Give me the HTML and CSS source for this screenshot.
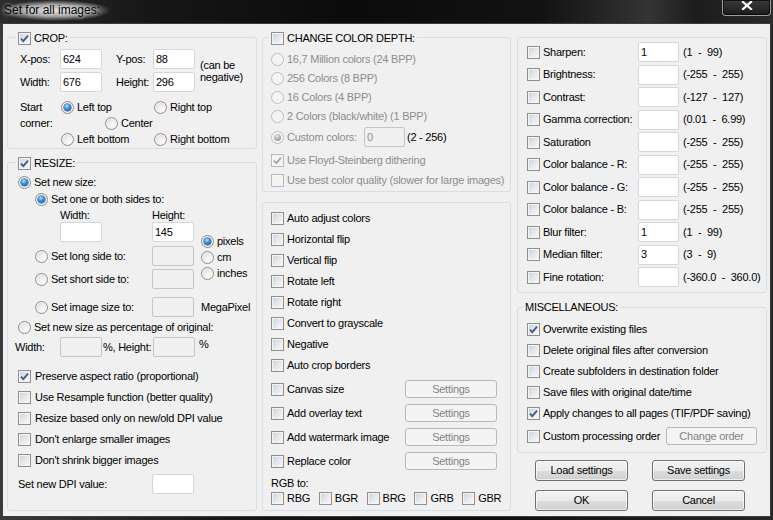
FILE: index.html
```html
<!DOCTYPE html>
<html lang="en">
<head>
<meta charset="utf-8">
<title>Set for all images</title>
<link rel="stylesheet" href="styles.css">
</head>
<body>
<div class="win">
  <div class="titlebar">
    <div class="title">Set for all images:</div>
    <div class="close"><svg width="12" height="9" viewBox="0 0 12 9"><path d="M2 1 L10 8 M10 1 L2 8" stroke="#fff" stroke-width="2.3" stroke-linecap="square"/></svg></div>
  </div>
  <div class="client">
    <!-- LEFT COLUMN -->
    <div class="col c1">
      <div class="grp crop">
        <div class="lgd lg-11"><span class="cb on"><svg width="11" height="11" viewBox="0 0 11 11"><path d="M2 5.6 4.3 8.1 9 2.6" fill="none" stroke="#3e5a96" stroke-width="1.8"/></svg></span><span>CROP:</span></div>
        <div class="cropgrid">
          <span class="cl1">X-pos:</span><span class="tb">624</span><span class="cl3">Y-pos:</span><span class="tb">88</span>
          <span class="note">(can be<br>negative)</span>
          <span class="cl1">Width:</span><span class="tb">676</span><span class="cl3">Height:</span><span class="tb">296</span>
        </div>
        <div class="corner">
          <span class="startlbl">Start<br>corner:</span>
          <span class="opt k-lt"><span class="rb on"></span>Left top</span>
          <span class="opt k-rt"><span class="rb"></span>Right top</span>
          <span class="opt k-c"><span class="rb"></span>Center</span>
          <span class="opt k-lb"><span class="rb"></span>Left bottom</span>
          <span class="opt k-rb"><span class="rb"></span>Right bottom</span>
        </div>
      </div>

      <div class="grp resize fill">
        <div class="lgd lg-11"><span class="cb on"><svg width="11" height="11" viewBox="0 0 11 11"><path d="M2 5.6 4.3 8.1 9 2.6" fill="none" stroke="#3e5a96" stroke-width="1.8"/></svg></span><span>RESIZE:</span></div>
        <div class="row h17 p10"><span class="opt"><span class="rb on"></span>Set new size:</span></div>
        <div class="row h17 p27"><span class="opt"><span class="rb on"></span>Set one or both sides to:</span></div>
        <div class="sizegrid">
          <span class="s-wl">Width:</span>
          <span class="s-hl">Height:</span>
          <span class="tb s-wi"></span>
          <span class="tb s-hi">145</span>
          <div class="units">
            <span class="opt"><span class="rb on"></span>pixels</span>
            <span class="opt"><span class="rb"></span>cm</span>
            <span class="opt"><span class="rb"></span>inches</span>
          </div>
          <span class="opt s-r4"><span class="rb"></span>Set long side to:</span>
          <span class="tb off s-i4"></span>
          <span class="opt s-r6"><span class="rb"></span>Set short side to:</span>
          <span class="tb off s-i6"></span>
          <span class="opt s-r8"><span class="rb"></span>Set image size to:</span>
          <span class="tb off s-i8"></span>
          <span class="s-mp">MegaPixel</span>
        </div>
        <div class="row h16 p10 mt2"><span class="opt"><span class="rb"></span>Set new size as percentage of original:</span></div>
        <div class="row pctrow">
          <span class="pw">Width:</span><span class="tb off"></span><span class="ph">%, Height:</span><span class="tb off"></span><span class="pp">%</span>
        </div>
        <div class="cblist">
          <div class="row h21"><span class="opt g4"><span class="cb on"><svg width="11" height="11" viewBox="0 0 11 11"><path d="M2 5.6 4.3 8.1 9 2.6" fill="none" stroke="#3e5a96" stroke-width="1.8"/></svg></span>Preserve aspect ratio (proportional)</span></div>
          <div class="row h21"><span class="opt g4"><span class="cb"></span>Use Resample function (better quality)</span></div>
          <div class="row h21"><span class="opt g4"><span class="cb"></span>Resize based only on new/old DPI value</span></div>
          <div class="row h21"><span class="opt g4"><span class="cb"></span>Don't enlarge smaller images</span></div>
          <div class="row h21"><span class="opt g4"><span class="cb"></span>Don't shrink bigger images</span></div>
        </div>
        <div class="row dpirow"><span class="dpil">Set new DPI value:</span><span class="tb"></span></div>
      </div>
    </div>

    <!-- MIDDLE COLUMN -->
    <div class="col c2">
      <div class="grp ccd">
        <div class="lgd lg-9"><span class="cb"></span><span>CHANGE COLOR DEPTH:</span></div>
        <div class="row h19 p8 dis"><span class="opt"><span class="rb"></span>16,7 Million colors (24 BPP)</span></div>
        <div class="row h19 p8 dis"><span class="opt"><span class="rb"></span>256 Colors (8 BPP)</span></div>
        <div class="row h19 p8 dis"><span class="opt"><span class="rb"></span>16 Colors (4 BPP)</span></div>
        <div class="row h19 p8 dis"><span class="opt"><span class="rb"></span>2 Colors (black/white) (1 BPP)</span></div>
        <div class="row h20 p8 mt1"><span class="opt dis w93"><span class="rb on"></span>Custom colors:</span><span class="tb off gray w41">0</span><span class="ml2">(2 - 256)</span></div>
        <div class="row h20 p8 mt3 dis"><span class="opt"><span class="cb on"><svg width="11" height="11" viewBox="0 0 11 11"><path d="M2 5.6 4.3 8.1 9 2.6" fill="none" stroke="#a7a7a7" stroke-width="1.8"/></svg></span>Use Floyd-Steinberg dithering</span></div>
        <div class="row h20 p8 dis"><span class="opt"><span class="cb"></span>Use best color quality (slower for large images)</span></div>
      </div>

      <div class="grp ops fill">
        <div class="row h21 p8"><span class="opt"><span class="cb"></span>Auto adjust colors</span></div>
        <div class="row h21 p8"><span class="opt"><span class="cb"></span>Horizontal flip</span></div>
        <div class="row h21 p8"><span class="opt"><span class="cb"></span>Vertical flip</span></div>
        <div class="row h21 p8"><span class="opt"><span class="cb"></span>Rotate left</span></div>
        <div class="row h21 p8"><span class="opt"><span class="cb"></span>Rotate right</span></div>
        <div class="row h21 p8"><span class="opt"><span class="cb"></span>Convert to grayscale</span></div>
        <div class="row h21 p8"><span class="opt"><span class="cb"></span>Negative</span></div>
        <div class="row h21 p8"><span class="opt"><span class="cb"></span>Auto crop borders</span></div>
        <div class="row h24 p8 mt1"><span class="opt w134"><span class="cb"></span>Canvas size</span><span class="btn off sbtn">Settings</span></div>
        <div class="row h24 p8"><span class="opt w134"><span class="cb"></span>Add overlay text</span><span class="btn off sbtn">Settings</span></div>
        <div class="row h24 p8"><span class="opt w134"><span class="cb"></span>Add watermark image</span><span class="btn off sbtn">Settings</span></div>
        <div class="row h24 p8"><span class="opt w134"><span class="cb"></span>Replace color</span><span class="btn off sbtn">Settings</span></div>
        <div class="row h14 p8 mt3">RGB to:</div>
        <div class="row h16 p8">
          <span class="opt w48"><span class="cb"></span>RBG</span>
          <span class="opt w48"><span class="cb"></span>BGR</span>
          <span class="opt w48"><span class="cb"></span>BRG</span>
          <span class="opt w48"><span class="cb"></span>GRB</span>
          <span class="opt w48"><span class="cb"></span>GBR</span>
        </div>
      </div>
    </div>

    <!-- RIGHT COLUMN -->
    <div class="col c3">
      <div class="grp adj">
        <div class="rrow"><span class="opt"><span class="cb"></span>Sharpen:</span><span class="tb w41">1</span><span class="rng">(1&nbsp; -&nbsp; 99)</span></div>
        <div class="rrow"><span class="opt"><span class="cb"></span>Brightness:</span><span class="tb w41"></span><span class="rng">(-255&nbsp; -&nbsp; 255)</span></div>
        <div class="rrow"><span class="opt"><span class="cb"></span>Contrast:</span><span class="tb w41"></span><span class="rng">(-127&nbsp; -&nbsp; 127)</span></div>
        <div class="rrow"><span class="opt"><span class="cb"></span>Gamma correction:</span><span class="tb w41"></span><span class="rng">(0.01&nbsp; -&nbsp; 6.99)</span></div>
        <div class="rrow"><span class="opt"><span class="cb"></span>Saturation</span><span class="tb w41"></span><span class="rng">(-255&nbsp; -&nbsp; 255)</span></div>
        <div class="rrow"><span class="opt"><span class="cb"></span>Color balance - R:</span><span class="tb w41"></span><span class="rng">(-255&nbsp; -&nbsp; 255)</span></div>
        <div class="rrow"><span class="opt"><span class="cb"></span>Color balance - G:</span><span class="tb w41"></span><span class="rng">(-255&nbsp; -&nbsp; 255)</span></div>
        <div class="rrow"><span class="opt"><span class="cb"></span>Color balance - B:</span><span class="tb w41"></span><span class="rng">(-255&nbsp; -&nbsp; 255)</span></div>
        <div class="rrow"><span class="opt"><span class="cb"></span>Blur filter:</span><span class="tb w41">1</span><span class="rng">(1&nbsp; -&nbsp; 99)</span></div>
        <div class="rrow"><span class="opt"><span class="cb"></span>Median filter:</span><span class="tb w41">3</span><span class="rng">(3&nbsp; -&nbsp; 9)</span></div>
        <div class="rrow"><span class="opt"><span class="cb"></span>Fine rotation:</span><span class="tb w41"></span><span class="rng">(-360.0&nbsp; -&nbsp; 360.0)</span></div>
      </div>

      <div class="grp misc">
        <div class="lgd lg-7"><span>MISCELLANEOUS:</span></div>
        <div class="row h21 p9"><span class="opt"><span class="cb on"><svg width="11" height="11" viewBox="0 0 11 11"><path d="M2 5.6 4.3 8.1 9 2.6" fill="none" stroke="#3e5a96" stroke-width="1.8"/></svg></span>Overwrite existing files</span></div>
        <div class="row h21 p9"><span class="opt"><span class="cb"></span>Delete original files after conversion</span></div>
        <div class="row h21 p9"><span class="opt"><span class="cb"></span>Create subfolders in destination folder</span></div>
        <div class="row h21 p9"><span class="opt"><span class="cb"></span>Save files with original date/time</span></div>
        <div class="row h21 p9"><span class="opt"><span class="cb on"><svg width="11" height="11" viewBox="0 0 11 11"><path d="M2 5.6 4.3 8.1 9 2.6" fill="none" stroke="#3e5a96" stroke-width="1.8"/></svg></span>Apply changes to all pages (TIF/PDF saving)</span></div>
        <div class="row h21 p9 mt2"><span class="opt w139"><span class="cb"></span>Custom processing order</span><span class="btn off obtn">Change order</span></div>
      </div>

      <div class="btns">
        <span class="btn">Load settings</span>
        <span class="btn">Save settings</span>
        <span class="btn">OK</span>
        <span class="btn">Cancel</span>
      </div>
    </div>
  </div>
</div>
</body>
</html>
```

FILE: styles.css
```css
* { box-sizing: border-box; margin: 0; padding: 0; }
html, body { width: 773px; height: 520px; overflow: hidden; }
body {
  background: linear-gradient(90deg, #3a3a3a 0, #161616 30%, #0b0b0b 60%, #262626 100%);
  font-family: "Liberation Sans", Arial, sans-serif;
  font-size: 11px;
  letter-spacing: -0.25px;
  line-height: 13px;
  color: #000;
}
.win { display: flex; flex-direction: column; height: 520px; }

/* title bar */
.titlebar {
  flex: none;
  height: 23px;
  display: flex;
  align-items: flex-start;
  background: linear-gradient(90deg, #2c2c2c 0, #161616 20%, #0b0b0b 45%, #121212 70%, #343434 84%, #1c1c1c 90%, #2b2b2b 100%);
}
.title {
  height: 21px;
  line-height: 21px;
  font-size: 12px;
  letter-spacing: 0;
  padding: 0 46px 0 4px;
  margin-right: auto;
  background: radial-gradient(ellipse closest-side at 38% 50%, rgba(230,230,230,.95) 0, rgba(205,205,205,.75) 55%, rgba(120,120,120,0) 100%);
  text-shadow: 0 0 4px #fff;
}
.close {
  width: 49px;
  height: 16px;
  margin-right: 2px;
  border: 1px solid #a0a0a0;
  border-top: none;
  border-radius: 0 0 4px 4px;
  background: linear-gradient(#3a3a3a, #1c1c1c);
  box-shadow: inset 0 0 0 1px rgba(0,0,0,.7);
  display: flex;
  justify-content: center;
  align-items: flex-start;
  padding-top: 1px;
}

/* client */
.client {
  flex: none;
  width: 769px;
  height: 494px;
  margin-left: 2px;
  border: 1px solid #3c3c3c;
  background: #f0f0f0;
  display: flex;
  padding: 13px 3px 5px 4px;
}
.col { display: flex; flex-direction: column; }
.c1 { width: 250px; margin-right: 5px; }
.c2 { width: 249px; margin-right: 6px; }
.c3 { width: 250px; }

.grp { position: relative; flex: none; border: 1px solid #d5dfe5; border-radius: 3px; }
.fill { flex: 1; }

.lgd {
  position: absolute;
  top: -7px;
  height: 14px;
  display: flex;
  align-items: center;
  gap: 3px;
  padding: 0 2px;
  background: #f0f0f0;
  white-space: nowrap;
}
.lg-11 { left: 8px; }
.lg-9 { left: 6px; }
.lg-7 { left: 5px; }

/* generic controls */
.row { display: flex; align-items: center; white-space: nowrap; }
.opt { display: inline-flex; align-items: center; gap: 3px; white-space: nowrap; }
.g4 { gap: 4px; }
.h14 { height: 14px; } .h16 { height: 16px; } .h17 { height: 17px; } .h19 { height: 19px; }
.h20 { height: 20px; } .h21 { height: 21px; } .h24 { height: 24px; }
.p8 { padding-left: 8px; } .p9 { padding-left: 9px; } .p10 { padding-left: 10px; } .p27 { padding-left: 27px; }
.mt1 { margin-top: 1px; } .mt2 { margin-top: 2px; } .mt3 { margin-top: 3px; }
.ml2 { margin-left: 2px; }
.w41 { width: 41px !important; } .w48 { width: 48px; } .w93 { width: 93px; } .w134 { width: 134px; } .w139 { width: 139px; }

.cb {
  flex: none;
  width: 13px;
  height: 13px;
  border: 1px solid #8e8f8f;
  background: linear-gradient(135deg, #cfd1d3 0, #e8e9ea 55%, #fbfbfb 100%);
  box-shadow: inset 0 0 0 1px #f4f4f4;
  display: inline-flex;
  align-items: center;
  justify-content: center;
}
.cb svg { display: block; }
.rb {
  flex: none;
  width: 13px;
  height: 13px;
  border-radius: 50%;
  border: 1px solid #8b8d8f;
  background: radial-gradient(circle at 65% 70%, #fdfdfd 0, #ececec 45%, #cfcfd0 100%);
  box-shadow: inset 0 0 0 1px #f6f6f6;
  display: inline-flex;
  align-items: center;
  justify-content: center;
}
.rb.on::after {
  content: "";
  width: 7px;
  height: 7px;
  border-radius: 50%;
  background: radial-gradient(circle at 40% 30%, #b0e4ff 0, #3d92dc 40%, #0c4c9c 100%);
  box-shadow: 0 0 0 0.5px #164f94;
}
.dis { color: #8d8d8d; }
.dis .rb { border-color: #bcbdbe; background: #f4f4f4; box-shadow: none; }
.dis .rb.on::after { background: radial-gradient(circle at 40% 30%, #e6e6e6 0, #b0b0b0 50%, #8e8e8e 100%); box-shadow: none; }
.dis .cb { border-color: #b8b9ba; background: #f4f4f4; box-shadow: none; }

.tb {
  flex: none;
  width: 42px;
  height: 20px;
  border: 1px solid #d3d8de;
  border-radius: 2px;
  background: #fff;
  padding: 0 2px;
  display: flex;
  align-items: center;
  white-space: nowrap;
}
.tb.off { background: #f0f0f0; border-color: #c3c6ca; }
.tb.gray { color: #8d8d8d; }

.btn {
  display: flex;
  align-items: center;
  justify-content: center;
  border: 1px solid #707070;
  border-radius: 3px;
  background: linear-gradient(#f2f2f2 0, #ebebeb 50%, #dddddd 51%, #cfcfcf 100%);
  box-shadow: inset 0 0 0 1px rgba(255,255,255,.65);
  white-space: nowrap;
}
.btn.off { border-color: #b5b8ba; background: #f4f4f4; color: #838383; box-shadow: none; }
.sbtn { width: 92px; height: 18px; }
.obtn { width: 91px; height: 18px; }

/* CROP */
.crop { padding: 11px 0 1px 12px; }
.cropgrid {
  display: grid;
  grid-template-columns: 40px 42px 51px 42px 1fr;
  grid-template-rows: 20px 20px;
  row-gap: 3px;
  align-items: center;
}
.cl3 { padding-left: 14px; }
.note { grid-column: 5; grid-row: 1 / 3; align-self: start; margin-top: 10px; padding-left: 5px; line-height: 12px; white-space: nowrap; }
.corner {
  margin-top: 7px;
  display: grid;
  grid-template-columns: 41px 93px 1fr;
  grid-template-rows: 16px 16px 16px;
  align-items: center;
}
.startlbl { grid-column: 1; grid-row: 1 / 3; align-self: start; line-height: 16px; }
.k-lt { grid-column: 2; grid-row: 1; }
.k-rt { grid-column: 3; grid-row: 1; }
.k-c { grid-column: 2 / 4; grid-row: 2; padding-left: 44px; }
.k-lb { grid-column: 2; grid-row: 3; }
.k-rb { grid-column: 3; grid-row: 3; }

/* RESIZE */
.resize { margin-top: 13px; padding-top: 11px; }
.sizegrid {
  display: grid;
  grid-template-columns: 52px 42px 50px 42px 7px 1fr;
  grid-template-rows: 14px 20px 4px 20px 3px 20px 8px 20px;
  align-items: center;
  white-space: nowrap;
}
.s-wl { grid-column: 2; grid-row: 1; }
.s-hl { grid-column: 4; grid-row: 1; }
.s-wi { grid-column: 2; grid-row: 2; }
.s-hi { grid-column: 4; grid-row: 2; }
.units { grid-column: 6; grid-row: 2 / 7; align-self: start; padding-top: 11px; display: flex; flex-direction: column; }
.units .opt { height: 16px; }
.s-r4 { grid-column: 1 / 4; grid-row: 4; padding-left: 27px; }
.s-i4 { grid-column: 4; grid-row: 4; }
.s-r6 { grid-column: 1 / 4; grid-row: 6; padding-left: 27px; }
.s-i6 { grid-column: 4; grid-row: 6; }
.s-r8 { grid-column: 1 / 4; grid-row: 8; padding-left: 27px; }
.s-i8 { grid-column: 4; grid-row: 8; }
.s-mp { grid-column: 6; grid-row: 8; }
.pctrow { height: 20px; margin-top: 2px; padding-left: 7px; }
.pw { width: 45px; }
.ph { width: 51px; padding-left: 1px; }
.pp { margin-left: 4px; align-self: flex-start; line-height: 14px; }
.cblist { margin-top: 9px; padding-left: 10px; }
.dpirow { height: 20px; margin-top: 3px; padding-left: 10px; }
.dpil { width: 134px; }

/* middle */
.ccd { padding: 12px 0 1px 0; }
.ops { margin-top: 10px; padding-top: 5px; }

/* right */
.adj {
  padding: 4px 0 4.5px 9px;
  display: flex;
  flex-direction: column;
  gap: 2.55px;
}
.rrow { height: 20px; display: flex; align-items: center; white-space: nowrap; }
.rrow .opt { width: 111px; }
.rng { margin-left: 4px; }
.misc { margin-top: 14px; padding: 11px 0 5px 0; }
.btns {
  margin-top: 7px;
  padding-left: 18px;
  display: grid;
  grid-template-columns: 93px 93px;
  grid-template-rows: 21px 21px;
  column-gap: 24px;
  row-gap: 9px;
}
```
